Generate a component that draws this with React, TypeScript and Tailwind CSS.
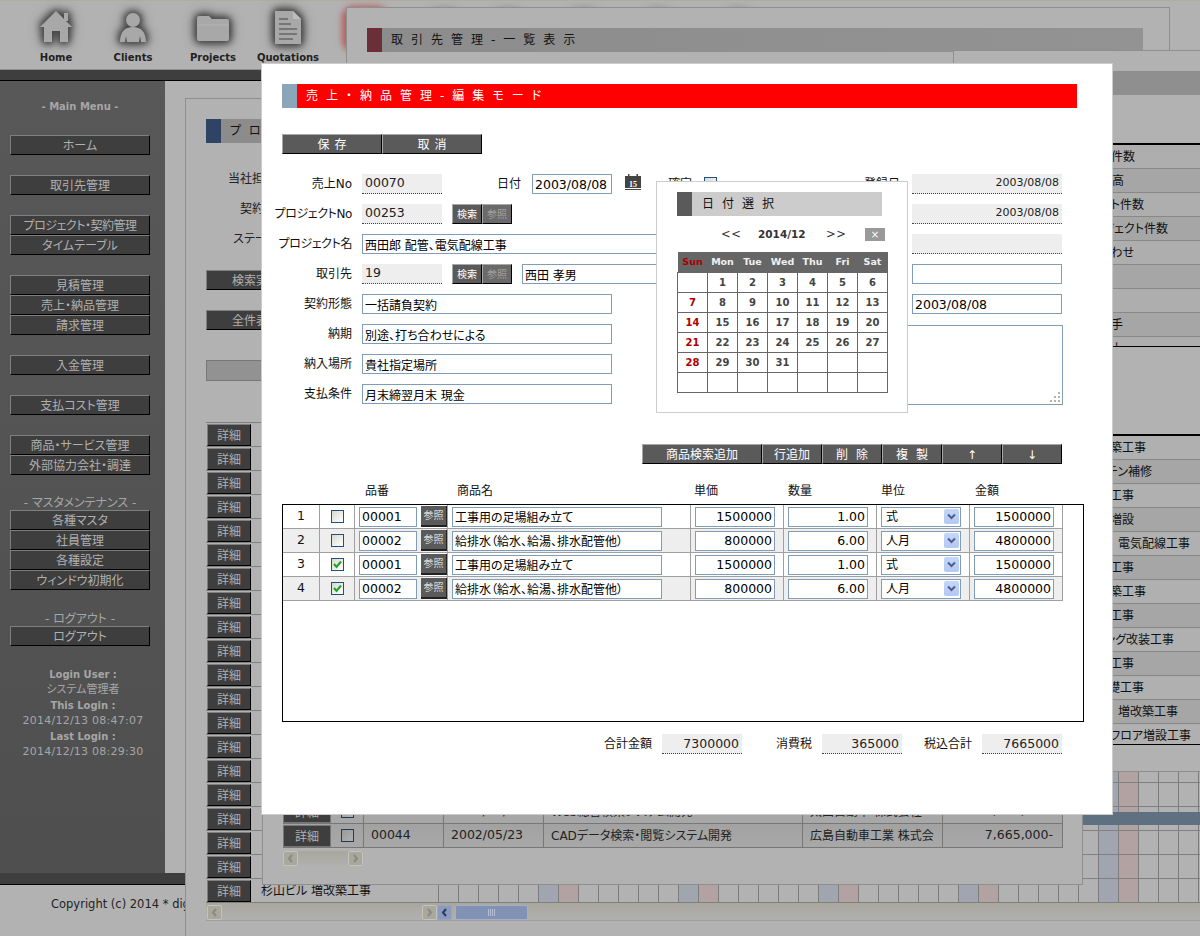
import React from 'react'

const sideGroups = [
  ['ホーム'],
  ['取引先管理'],
  ['プロジェクト・契約管理', 'タイムテーブル'],
  ['見積管理', '売上・納品管理', '請求管理'],
  ['入金管理'],
  ['支払コスト管理'],
  ['商品・サービス管理', '外部協力会社・調達'],
]
const masterMenu = ['各種マスタ', '社員管理', '各種設定', 'ウィンドウ初期化']

const upperRows = [
  { t: '受注件数', end: 1134 },
  { t: '売上高', end: 1123 },
  { t: 'プロジェクト件数', end: 1143 },
  { t: '新規プロジェクト件数', end: 1167 },
  { t: 'お問い合わせ', end: 1133 },
  { t: '', end: 1133 },
  { t: '', end: 1133 },
  { t: '入手', end: 1122 },
  { t: '計上', end: 1122 },
]
const lowerRows = [
  { t: '増改築工事', end: 1145 },
  { t: 'カーテン補修', end: 1151 },
  { t: '塗装工事', end: 1133 },
  { t: '店舗増設', end: 1133 },
  { t: '西田郎 配管、　電気配線工事', end: 1189 },
  { t: '外壁工事', end: 1133 },
  { t: '新築工事', end: 1145 },
  { t: '内装工事', end: 1133 },
  { t: 'ビルディング改装工事', end: 1173 },
  { t: '電気工事', end: 1133 },
  { t: '基礎工事', end: 1143 },
  { t: '田中ビル　増改築工事', end: 1177 },
  { t: 'ABCビル フロア増設工事', end: 1190 },
]
const items = [
  { no: '1', checked: false, code: '00001', name: '工事用の足場組み立て', price: '1500000', qty: '1.00', unit: '式', total: '1500000' },
  { no: '2', checked: false, code: '00002', name: '給排水（給水、給湯、排水配管他）', price: '800000', qty: '6.00', unit: '人月', total: '4800000' },
  { no: '3', checked: true, code: '00001', name: '工事用の足場組み立て', price: '1500000', qty: '1.00', unit: '式', total: '1500000' },
  { no: '4', checked: true, code: '00002', name: '給排水（給水、給湯、排水配管他）', price: '800000', qty: '6.00', unit: '人月', total: '4800000' },
]
const calendar = [
  ['', '1', '2', '3', '4', '5', '6'],
  ['7', '8', '9', '10', '11', '12', '13'],
  ['14', '15', '16', '17', '18', '19', '20'],
  ['21', '22', '23', '24', '25', '26', '27'],
  ['28', '29', '30', '31', '', '', ''],
  ['', '', '', '', '', '', ''],
]
const ganttCells = Array.from({ length: 39 }, (_, i) => i)
const detailRows = Array.from({ length: 20 }, (_, i) => i)

const inputCls = 'h-[20px] border border-[#7f9db9] bg-white px-[2px] text-[12.5px] text-black outline-none'
const darkBtn = 'flex items-center justify-center border border-t-[#a8a8a8] border-l-[#a8a8a8] border-r-black border-b-black bg-[#5a5a5a] text-white'
const dimBtn = 'flex items-center justify-center border border-t-[#7f7f7f] border-l-[#7f7f7f] border-r-black border-b-black bg-[#3e3e3e] pt-px text-[#b0b0b0]'

function NavIcon({ label, width, children }: { label: string; width: string; children: React.ReactNode }) {
  return (
    <div className={`flex flex-col items-center ${width}`}>
      <svg width="44" height="44" viewBox="0 0 44 44" className="mt-[5px] [filter:drop-shadow(0_0_3px_#444)_drop-shadow(0_0_4px_#505050)_drop-shadow(0_0_3px_#707070)]">
        {children}
      </svg>
      <span className="mt-[2px] text-[10px] font-bold leading-[12px] text-[#222]">{label}</span>
    </div>
  )
}

function Ro({ children, right, small, w = 'w-[80px]' }: { children?: React.ReactNode; right?: boolean; small?: boolean; w?: string }) {
  return (
    <div className={`flex h-[20px] shrink-0 items-center border-b border-dotted border-[#444] bg-[#eeeeee] px-[3px] text-[#222] ${w} ${right ? 'justify-end' : ''} ${small ? 'text-[11px]' : 'text-[12.5px]'}`}>
      {children}
    </div>
  )
}

function Label({ children, tight }: { children: React.ReactNode; tight?: boolean }) {
  return (
    <div className={`flex w-[70px] shrink-0 justify-end whitespace-nowrap text-[12px] leading-[20px] text-[#111] ${tight ? 'tracking-[-0.4px]' : ''}`}>
      <span>{children}</span>
    </div>
  )
}

function SearchPair() {
  return (
    <div className="ml-[10px] flex shrink-0">
      <div className={`${darkBtn} h-[20px] w-[30px] text-[10px]`}>検索</div>
      <div className="flex h-[20px] w-[30px] items-center justify-center border border-t-[#a8a8a8] border-l-[#a8a8a8] border-r-black border-b-black bg-[#6a6a6a] text-[10px] text-[#a0a0a0]">参照</div>
    </div>
  )
}

function CheckBox({ checked, dim }: { checked?: boolean; dim?: boolean }) {
  return (
    <div className={`flex h-[13px] w-[13px] items-center justify-center border ${dim ? 'border-[#1d3c5c] bg-gradient-to-br from-[#999999] to-[#b2b2b2]' : 'border-[#1c5180] bg-gradient-to-br from-[#d8d8d2] to-white'}`}>
      {checked && (
        <svg width="9" height="9" viewBox="0 0 9 9">
          <path d="M1 4l2.5 3L8 1.5" fill="none" stroke="#21a121" strokeWidth="2" />
        </svg>
      )}
    </div>
  )
}

function ScrollBtn({ dir, active }: { dir: 'left' | 'right'; active?: boolean }) {
  return (
    <div className={`flex h-[15px] w-[15px] shrink-0 items-center justify-center rounded-[2px] border ${active ? 'border-[#9aa6c0] bg-[#8a9bbd]' : 'border-[#c4c4b8] bg-[#a8a89e]'}`}>
      <svg width="7" height="9" viewBox="0 0 7 9">
        <path d={dir === 'left' ? 'M5 1L2 4.5 5 8' : 'M2 1l3 3.5L2 8'} fill="none" stroke={active ? '#2a3a5c' : '#8a8a80'} strokeWidth="2" />
      </svg>
    </div>
  )
}

function WindowTitle({ color, bar, text, dark }: { color: string; bar: string; text: string; dark?: boolean }) {
  return (
    <div className={`flex h-[24px] items-center ${bar}`}>
      <div className={`h-full w-[15px] shrink-0 ${color}`} />
      <span className={`ml-[9px] whitespace-nowrap text-[12px] tracking-[8px] ${dark ? 'text-[#111]' : 'text-white'}`}>{text}</span>
    </div>
  )
}

function Sidebar() {
  return (
    <aside className="h-[792px] w-[165px] shrink-0 bg-gradient-to-b from-[#585858] to-[#4f4f4f] px-[10px] text-[12px]">
      <div className="h-[54px] w-[140px] pt-[20px] text-center text-[10px] font-bold leading-[12px] text-[#a6a6a6]">- Main Menu -</div>
      <div className="flex w-[140px] flex-col gap-[20px]">
        {sideGroups.map((group) => (
          <div key={group[0]}>
            {group.map((m) => (
              <div key={m} className={`${dimBtn} h-[20px] ${m.length > 10 ? 'tracking-[-0.5px]' : ''}`}>{m}</div>
            ))}
          </div>
        ))}
      </div>
      <div className="mt-[20px] flex h-[15px] w-[140px] items-center justify-center pt-px text-[#a6a6a6]">- マスタメンテナンス -</div>
      <div className="w-[140px]">
        {masterMenu.map((m) => (
          <div key={m} className={`${dimBtn} h-[20px]`}>{m}</div>
        ))}
      </div>
      <div className="mt-[20px] flex h-[16px] w-[140px] items-center justify-center pt-px text-[#a6a6a6]">- ログアウト -</div>
      <div className={`${dimBtn} h-[20px] w-[140px]`}>ログアウト</div>
      <div className="mt-[21px] flex w-[146px] flex-col items-center text-[#a6a6a6] [&>div]:flex [&>div]:h-[15.5px] [&>div]:items-center">
        <div className="text-[10px] font-bold">Login User :</div>
        <div className="text-[11px]">システム管理者</div>
        <div className="text-[10px] font-bold">This Login :</div>
        <div className="text-[11px] tracking-[0.25px]">2014/12/13 08:47:07</div>
        <div className="text-[10px] font-bold">Last Login :</div>
        <div className="text-[11px] tracking-[0.25px]">2014/12/13 08:29:30</div>
      </div>
    </aside>
  )
}

// project list behind everything, its rows run off the right edge
function ProjectWindow() {
  return (
    <section className="absolute left-[185px] top-[98px] h-[838px] w-[1100px] border-l border-t border-[#8f8f8f] bg-[#b2b2b2] pl-[20px] pt-[20px]">
      <WindowTitle color="bg-[#2f4464]" bar="bg-[#8c8c8c] w-[500px]" text="プロジェクト・契約管理" dark />
      <div className="mt-[21px] w-[82px] text-right text-[12px] leading-[30px] text-[#222] [&>div]:whitespace-nowrap">
        <div>当社担当者</div>
        <div>契約形態</div>
        <div>ステータス</div>
      </div>
      <div className={`${dimBtn} mt-[16px] h-[20px] w-[100px] text-[12px]`}>検索実行</div>
      <div className={`${dimBtn} mt-[20px] h-[20px] w-[100px] text-[12px]`}>全件表示</div>
      <div className="mt-[30px] h-[21px] w-[400px] border border-[#777] bg-[#929292]" />
      <div className="mt-[41px] w-[1100px] border-t border-[#808080]">
        {detailRows.map((i) => (
          <div key={i} className="flex h-[24px] border-b border-[#808080]">
            <div className={`${dimBtn} ml-px mt-px h-[22px] w-[44px] shrink-0 text-[12px]`}>詳細</div>
            <div className="flex w-[187px] shrink-0 items-center whitespace-nowrap pl-[10px] text-[12px] text-[#111]">{i === 19 ? '杉山ビル 増改築工事' : ''}</div>
            {i >= 14 && ganttCells.map((c) => (
              <div key={c} className={`h-full w-[20px] shrink-0 border-l border-[#7c7c7c] ${c % 7 === 5 ? 'bg-[#a0a5b0]' : c % 7 === 6 ? 'bg-[#b2a2a2]' : ''}`} />
            ))}
          </div>
        ))}
      </div>
      <div className="h-[18px] w-[1100px] border-b border-[#a0a0a0] bg-gradient-to-b from-[#a9a79d] to-[#b0b0b0]">
        <div className="ml-px flex h-[17px] items-center pt-[1px]">
          <ScrollBtn dir="left" />
          <div className="w-[200px]" />
          <ScrollBtn dir="right" />
          <ScrollBtn dir="left" active />
          <div className="ml-[3px] flex h-[15px] w-[73px] items-center justify-center rounded-[2px] border border-[#a4b0c8] bg-[#8292b5]">
            <svg width="8" height="7" viewBox="0 0 8 7">
              <path d="M.5 0v7M2.5 0v7M4.5 0v7M6.5 0v7" stroke="#b4c0d8" strokeWidth="1" />
            </svg>
          </div>
        </div>
      </div>
    </section>
  )
}

function ClientWindow() {
  return (
    <section className="absolute left-[346px] top-[7px] h-[240px] w-[824px] border border-[#8f8f8f] bg-[#b2b2b2] px-[20px] pt-[20px]">
      <WindowTitle color="bg-[#6a2f38]" bar="bg-gradient-to-r from-[#8c8c8c] to-[#939393] w-[776px]" text="取引先管理-一覧表示" dark />
    </section>
  )
}

function ContractWindow() {
  const row = 'flex shrink-0 h-[24px] items-center border-b border-[#888] text-[12px] text-[#111]'
  return (
    <section className="absolute left-[953px] top-[50px] h-[722px] w-[260px] border-l border-t border-b border-[#8f8f8f] bg-[#b2b2b2] pt-[20px]">
      <div className="ml-[20px] h-[24px] bg-[#8f8f8f]" />
      <div className="mt-[48px] h-[204px] w-[247px] overflow-hidden border-y-2 border-b border-black">
        {upperRows.map((r, i) => (
          <div key={i} className={`${row} w-full justify-end whitespace-nowrap ${i % 2 ? 'bg-[#a6a6a6]' : 'bg-[#aeaeae]'}`} style={{ paddingRight: 1200 - r.end }}>{r.t}</div>
        ))}
      </div>
      <div className="mt-[87px] h-[311px] w-[247px] overflow-hidden border-y-2 border-b border-black">
        {lowerRows.map((r, i) => (
          <div key={i} className={`${row} w-full justify-end whitespace-nowrap ${i % 2 ? 'bg-[#a6a6a6]' : 'bg-[#b0b0b0]'}`} style={{ paddingRight: 1200 - r.end }}>{r.t}</div>
        ))}
      </div>
    </section>
  )
}

function ListRow({ no, date, title, company, price }: { no: string; date: string; title: string; company: string; price: string }) {
  return (
    <div className="flex h-[24px] w-[780px] border-b border-[#777] bg-gradient-to-b from-[#a2a2a2] to-[#a8a8a8] text-[12.5px] text-[#222] [&>div]:flex [&>div]:items-center [&>div]:border-r [&>div]:border-[#777]">
      <div className={`${dimBtn} mt-px h-[22px] w-[48px] text-[12px]`}>詳細</div>
      <div className="w-[33px] justify-center"><CheckBox dim /></div>
      <div className="w-[80px] pl-[7px]">{no}</div>
      <div className="w-[100px] pl-[7px]">{date}</div>
      <div className="w-[259px] pl-[7px] text-[12px]">{title}</div>
      <div className="w-[140px] overflow-hidden whitespace-nowrap pl-[7px] text-[12px]">{company}</div>
      <div className="w-[120px] justify-end pr-[9px]">{price}</div>
    </div>
  )
}

function SalesListWindow() {
  return (
    <section className="absolute left-[262px] top-[500px] flex h-[385px] w-[821px] flex-col justify-end border border-[#8f8f8f] bg-[#b2b2b2] pb-[18px] pl-[20px]">
      <ListRow no="00043" date="2002/04/30" title="Web総合検索システム開発" company="太田自動車 株式会社" price="7,665,000-" />
      <ListRow no="00044" date="2002/05/23" title="CADデータ検索・閲覧システム開発" company="広島自動車工業 株式会" price="7,665,000-" />
      <div className="mt-[3px] flex h-[15px] w-[80px] justify-between bg-gradient-to-b from-[#a9a79d] to-[#b0b0b0]">
        <ScrollBtn dir="left" />
        <ScrollBtn dir="right" />
      </div>
    </section>
  )
}

function DatePicker() {
  const week = ['Sun', 'Mon', 'Tue', 'Wed', 'Thu', 'Fri', 'Sat']
  return (
    <div className="absolute left-[394px] top-[117px] h-[232px] w-[252px] border border-[#cccccc] bg-white pl-[20px] pt-[10px]">
      <div className="flex h-[24px] w-[205px] items-center bg-[#cccccc]">
        <div className="h-full w-[15px] bg-[#5a5a5a]" />
        <span className="ml-[10px] text-[12px] tracking-[8px] text-[#111]">日付選択</span>
      </div>
      <div className="mt-[12px] flex h-[24px] items-start text-[#333]">
        <span className="ml-[44px] w-[18px] text-[11.5px] leading-[13px] tracking-[0.5px]">&lt;&lt;</span>
        <span className="ml-[19px] w-[48px] whitespace-nowrap text-[10.5px] font-bold leading-[13px]">2014/12</span>
        <span className="ml-[20px] w-[18px] text-[11.5px] leading-[13px] tracking-[0.5px]">&gt;&gt;</span>
        <div className="ml-[21px] flex h-[13px] w-[20px] items-center justify-center bg-[#999] text-[10px] leading-none text-white">×</div>
      </div>
      <table className="w-[211px] table-fixed border-collapse">
        <thead>
          <tr className="h-[20px] bg-[#666]">
            {week.map((d, i) => (
              <th key={d} className={`p-0 text-center text-[9.5px] font-bold ${i === 0 ? 'text-[#a80000]' : 'text-[#f0f0f0]'}`}>{d}</th>
            ))}
          </tr>
        </thead>
        <tbody>
          {calendar.map((days, r) => (
            <tr key={r} className="h-[20px]">
              {days.map((d, i) => (
                <td key={i} className={`border border-[#666] p-0 text-center text-[10px] font-bold ${i === 0 ? 'text-[#b00000]' : 'text-[#444]'}`}>{d}</td>
              ))}
            </tr>
          ))}
        </tbody>
      </table>
    </div>
  )
}

function ItemRow({ item, even }: { item: (typeof items)[number]; even: boolean }) {
  return (
    <div className={`flex h-[24px] w-[780px] border-b border-[#a0a0a0] text-[12.5px] text-[#111] ${even ? 'bg-[#eeeeee]' : 'bg-white'} [&>div]:flex [&>div]:items-center [&>div]:border-r [&>div]:border-[#a0a0a0]`}>
      <div className="w-[37px] justify-center">{item.no}</div>
      <div className="w-[35px] justify-center"><CheckBox checked={item.checked} /></div>
      <div className="w-[93px] pl-[4px]">
        <input readOnly value={item.code} className={`${inputCls} w-[58px]`} />
        <div className="ml-[4px] flex h-[21px] w-[26px] items-center justify-center border-b-2 border-r border-[#222] bg-[#5a5a5a] text-[10px] text-[#ddd]">参照</div>
      </div>
      <div className="w-[243px] pl-[4px]">
        <input readOnly value={item.name} className={`${inputCls} w-[210px] text-[12px]`} />
      </div>
      <div className="w-[93px] pl-[4px]">
        <input readOnly value={item.price} className={`${inputCls} w-[80px] text-right`} />
      </div>
      <div className="w-[93px] pl-[4px]">
        <input readOnly value={item.qty} className={`${inputCls} w-[80px] text-right`} />
      </div>
      <div className="w-[93px] pl-[4px]">
        <div className={`${inputCls} flex w-[80px] items-center justify-between !pr-px text-[12px]`}>
          <span className="pl-[2px]">{item.unit}</span>
          <div className="flex h-[15px] w-[15px] items-center justify-center rounded-[2px] bg-gradient-to-b from-[#c5d6fa] to-[#b4c8f3]">
            <svg width="9" height="7" viewBox="0 0 9 7">
              <path d="M1 1.5l3.5 3.5L8 1.5" fill="none" stroke="#4d6185" strokeWidth="2" />
            </svg>
          </div>
        </div>
      </div>
      <div className="w-[93px] pl-[4px]">
        <input readOnly value={item.total} className={`${inputCls} w-[80px] text-right`} />
      </div>
    </div>
  )
}

function EditModal() {
  const actions = [
    { t: '商品検索追加', w: 'w-[120px]', track: '' },
    { t: '行追加', w: 'w-[60px]', track: '' },
    { t: '削除', w: 'w-[60px]', track: 'pl-[8px] tracking-[8px]' },
    { t: '複製', w: 'w-[60px]', track: 'pl-[8px] tracking-[8px]' },
    { t: '↑', w: 'w-[60px]', track: '' },
    { t: '↓', w: 'w-[60px]', track: '' },
  ]
  return (
    <section className="absolute left-[261px] top-[63px] h-[752px] w-[852px] border border-[#cccccc] bg-white px-[20px] pt-[20px]">
      <div className="flex h-[24px] w-[795px] items-center bg-[#ff0000]">
        <div className="h-full w-[15px] shrink-0 bg-[#8ba5bb]" />
        <span className="ml-[9px] whitespace-nowrap text-[12px] tracking-[8px] text-white">売上・納品管理-編集モード</span>
      </div>

      <div className="mt-[26px] flex">
        <div className={`${darkBtn} h-[20px] w-[100px] pl-[5px] pt-px text-[12px] tracking-[5px]`}>保存</div>
        <div className={`${darkBtn} h-[20px] w-[100px] pl-[5px] pt-px text-[12px] tracking-[5px]`}>取消</div>
      </div>

      <div className="mt-[20px] flex">
        <div className="flex w-[630px] shrink-0 flex-col gap-[10px]">
          <div className="flex items-start">
            <Label>売上No</Label>
            <div className="ml-[10px]"><Ro>00070</Ro></div>
            <div className="w-[79px] text-right text-[12px] leading-[20px] text-[#111]">日付</div>
            <input readOnly value="2003/08/08" className={`${inputCls} ml-[11px] w-[80px]`} />
            <svg width="16" height="16" viewBox="0 0 16 16" className="ml-[13px] shrink-0">
              <rect x="0" y="2" width="16" height="12" fill="#444" />
              <rect x="3" y="0" width="1.5" height="4" fill="#444" />
              <rect x="11.5" y="0" width="1.5" height="4" fill="#444" />
              <rect x="0" y="15" width="16" height="1" fill="#444" />
              <text x="8" y="12.5" textAnchor="middle" fontSize="8" fontWeight="bold" fontFamily="Liberation Serif, serif" fill="#fff">15</text>
            </svg>
            <div className="ml-[27px] w-[24px] whitespace-nowrap text-[12px] leading-[20px] text-[#111]">確定</div>
            <div className="ml-[12px] mt-[3px]"><CheckBox /></div>
            <div className="ml-auto whitespace-nowrap pr-[12px] text-[12px] leading-[20px] text-[#111]">登録日</div>
          </div>
          <div className="flex items-start">
            <Label tight>プロジェクトNo</Label>
            <div className="ml-[10px]"><Ro>00253</Ro></div>
            <SearchPair />
          </div>
          <div className="flex items-start">
            <Label tight>プロジェクト名</Label>
            <input readOnly value="西田郎 配管、電気配線工事" className={`${inputCls} ml-[10px] w-[538px] text-[12px]`} />
          </div>
          <div className="flex items-start">
            <Label>取引先</Label>
            <div className="ml-[10px]"><Ro>19</Ro></div>
            <SearchPair />
            <input readOnly value="西田 孝男" className={`${inputCls} ml-[10px] w-[300px] text-[12px]`} />
          </div>
          {[
            ['契約形態', '一括請負契約'],
            ['納期', '別途、打ち合わせによる'],
            ['納入場所', '貴社指定場所'],
            ['支払条件', '月末締翌月末 現金'],
          ].map(([label, value]) => (
            <div key={label} className="flex items-start">
              <Label>{label}</Label>
              <input readOnly value={value} className={`${inputCls} ml-[10px] w-[250px] text-[12px]`} />
            </div>
          ))}
        </div>
        <div className="flex w-[150px] shrink-0 flex-col gap-[10px]">
          <Ro right small w="w-[150px]">2003/08/08</Ro>
          <Ro right small w="w-[150px]">2003/08/08</Ro>
          <Ro w="w-[150px]" />
          <input readOnly value="" className={`${inputCls} w-[150px]`} />
          <input readOnly value="2003/08/08" className={`${inputCls} w-[150px]`} />
          <div className="relative -ml-[100px] mt-px h-[80px] w-[251px]">
            <textarea readOnly className="block h-full w-full resize-none border border-[#7f9db9] bg-white outline-none" />
            <svg width="10" height="10" viewBox="0 0 10 10" className="absolute bottom-[3px] right-[3px]">
              <path d="M8 0h2v2H8zM4 4h2v2H4zM8 4h2v2H8zM0 8h2v2H0zM4 8h2v2H4zM8 8h2v2H8z" fill="#b5b5a0" />
            </svg>
          </div>
        </div>
      </div>

      <div className="mt-[39px] flex w-[780px] justify-end">
        {actions.map((a) => (
          <div key={a.t} className={`${darkBtn} h-[20px] pt-px text-[12px] ${a.w} ${a.track}`}>{a.t}</div>
        ))}
      </div>

      <div className="mt-[20px] flex h-[20px] pl-[83px] text-[12px] leading-[14px] text-[#111]">
        <div className="w-[92px]">品番</div>
        <div className="w-[237px]">商品名</div>
        <div className="w-[94px]">単価</div>
        <div className="w-[93px]">数量</div>
        <div className="w-[94px]">単位</div>
        <div>金額</div>
      </div>

      <div className="h-[218px] w-[802px] border border-black">
        {items.map((item, i) => (
          <ItemRow key={i} item={item} even={i % 2 === 1} />
        ))}
      </div>

      <div className="mt-[12px] flex w-[780px] justify-end text-[12px] leading-[20px] text-[#111]">
        {[
          ['合計金額', '7300000'],
          ['消費税', '365000'],
          ['税込合計', '7665000'],
        ].map(([label, value]) => (
          <React.Fragment key={label}>
            <div className="w-[80px] pr-[10px] text-right">{label}</div>
            <Ro right>{value}</Ro>
          </React.Fragment>
        ))}
      </div>

      <DatePicker />
    </section>
  )
}

export default function App() {
  const headerGlows = ['left-[426px]', 'left-[490px]', 'left-[566px]', 'left-[640px]', 'left-[720px]']
  return (
    <div className="relative h-[936px] w-[1200px] overflow-hidden bg-[#b2b2b2] font-['DejaVu_Sans','Noto_Sans_CJK_JP',sans-serif] [font-feature-settings:'palt']">
      <header className="flex h-[70px] border-b border-t border-b-[#8f8f8f] border-t-[#b0ad9f] pl-[16px]">
        <NavIcon label="Home" width="w-[80px]">
          <path d="M22 5L38 21h-4v15H26V25h-8v11H10V21H6z" fill="#a8a8a8" />
          <rect x="30" y="7" width="4" height="8" fill="#a8a8a8" />
        </NavIcon>
        <NavIcon label="Clients" width="w-[74px]">
          <circle cx="22" cy="14" r="7" fill="#a8a8a8" />
          <path d="M9 36c0-10 5-15 13-15s13 5 13 15h-5l-1-6-1 6H16l-1-6-1 6z" fill="#a8a8a8" />
        </NavIcon>
        <NavIcon label="Projects" width="w-[86px]">
          <path d="M6 12a2 2 0 012-2h10l3 3h15a2 2 0 012 2v18a2 2 0 01-2 2H8a2 2 0 01-2-2z" fill="#a8a8a8" />
          <path d="M6 19h32" stroke="#b4b4b4" strokeWidth="1" />
        </NavIcon>
        <NavIcon label="Quotations" width="w-[64px]">
          <path d="M9 5h18l8 8v25H9z" fill="#a8a8a8" />
          <path d="M27 5v8h8z" fill="#bdbdbd" />
          <path d="M13 13h9M13 18h12M13 23h18M13 28h18M13 33h14" stroke="#666" strokeWidth="1.5" />
        </NavIcon>
      </header>
      <div className="h-[11px] border-b border-black bg-[#3e3e3e]" />
      <div className="flex">
        <Sidebar />
      </div>
      <div className="h-[12px] border-b border-black bg-[#3e3e3e]" />
      <footer className="whitespace-nowrap pl-[51px] pt-[12px] text-[11.5px] leading-[14px] text-[#222]">Copyright (c) 2014 * digital-works</footer>

      {headerGlows.map((g) => (
        <div key={g} className={`absolute top-[10px] h-[28px] w-[36px] rounded-full bg-[#707070] blur-[4px] ${g}`} />
      ))}
      <div className="absolute left-[342px] top-[6px] h-[46px] w-[46px] rounded-[12px] bg-[#b85a5a] blur-[3px]" />

      <ProjectWindow />
      <ClientWindow />
      <SalesListWindow />
      <ContractWindow />
      <div className="absolute left-[1083px] top-[812px] h-[13px] w-[117px] bg-[#5f7180]" />
      <EditModal />
    </div>
  )
}
